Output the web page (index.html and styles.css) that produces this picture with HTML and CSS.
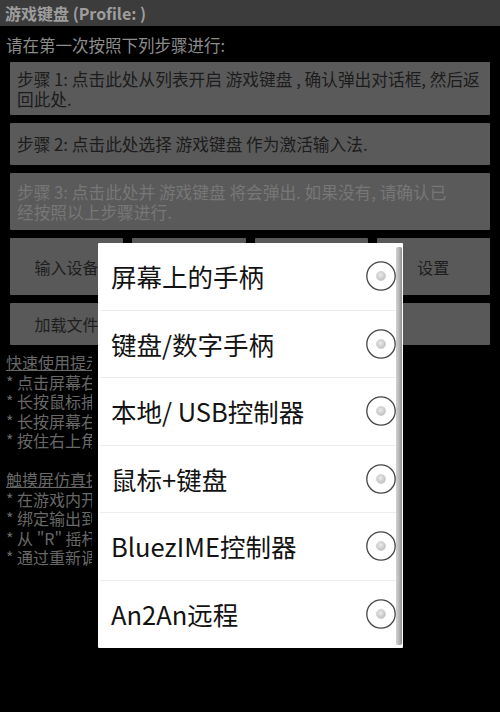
FILE: index.html
```html
<!DOCTYPE html>
<html lang="zh">
<head>
<meta charset="utf-8">
<title>游戏键盘</title>
<link rel="stylesheet" href="styles.css">
</head>
<body>
<div class="screen">
  <div class="titlebar">游戏键盘 (Profile: )</div>
  <div class="intro">请在第一次按照下列步骤进行:</div>
  <div class="steps">
    <div class="step step1">步骤 1: 点击此处从列表开启 游戏键盘 , 确认弹出对话框, 然后返<br>回此处.</div>
    <div class="step step2">步骤 2: 点击此处选择 游戏键盘 作为激活输入法.</div>
    <div class="step step3 disabled">步骤 3: 点击此处并 游戏键盘 将会弹出. 如果没有, 请确认已<br>经按照以上步骤进行.</div>
    <div class="btnrow tall">
      <div class="btn">输入设备</div>
      <div class="btn"></div>
      <div class="btn"></div>
      <div class="btn">设置</div>
    </div>
    <div class="btnrow short">
      <div class="btn">加载文件</div>
      <div class="btn"></div>
      <div class="btn wide"></div>
    </div>
  </div>
  <div class="hints">
    <div class="hhead">快速使用提示</div>
    <div class="hline">* 点击屏幕右</div>
    <div class="hline">* 长按鼠标捕</div>
    <div class="hline">* 长按屏幕右</div>
    <div class="hline">* 按住右上角</div>
    <div class="hline blank">&nbsp;</div>
    <div class="hhead">触摸屏仿真提</div>
    <div class="hline">* 在游戏内开</div>
    <div class="hline">* 绑定输出到</div>
    <div class="hline">* 从 "R" 摇杆</div>
    <div class="hline">* 通过重新调</div>
  </div>

  <div class="dialog">
    <div class="item"><span class="label">屏幕上的手柄</span><svg class="radio" viewBox="0 0 30 30"><defs><radialGradient id="g" cx="45%" cy="40%" r="60%"><stop offset="0" stop-color="#ececec"/><stop offset="1" stop-color="#bdbdbd"/></radialGradient></defs><circle cx="15" cy="15" r="14.2" fill="#fff" stroke="#454545" stroke-width="1.3"/><circle cx="15" cy="15" r="4.6" fill="url(#g)" stroke="#d4d4d4" stroke-width="0.8"/></svg></div>
    <div class="item"><span class="label">键盘/数字手柄</span><svg class="radio" viewBox="0 0 30 30"><circle cx="15" cy="15" r="14.2" fill="#fff" stroke="#454545" stroke-width="1.3"/><circle cx="15" cy="15" r="4.6" fill="url(#g)" stroke="#d4d4d4" stroke-width="0.8"/></svg></div>
    <div class="item"><span class="label">本地/ USB控制器</span><svg class="radio" viewBox="0 0 30 30"><circle cx="15" cy="15" r="14.2" fill="#fff" stroke="#454545" stroke-width="1.3"/><circle cx="15" cy="15" r="4.6" fill="url(#g)" stroke="#d4d4d4" stroke-width="0.8"/></svg></div>
    <div class="item"><span class="label">鼠标+键盘</span><svg class="radio" viewBox="0 0 30 30"><circle cx="15" cy="15" r="14.2" fill="#fff" stroke="#454545" stroke-width="1.3"/><circle cx="15" cy="15" r="4.6" fill="url(#g)" stroke="#d4d4d4" stroke-width="0.8"/></svg></div>
    <div class="item"><span class="label">BluezIME控制器</span><svg class="radio" viewBox="0 0 30 30"><circle cx="15" cy="15" r="14.2" fill="#fff" stroke="#454545" stroke-width="1.3"/><circle cx="15" cy="15" r="4.6" fill="url(#g)" stroke="#d4d4d4" stroke-width="0.8"/></svg></div>
    <div class="item last"><span class="label">An2An远程</span><svg class="radio" viewBox="0 0 30 30"><circle cx="15" cy="15" r="14.2" fill="#fff" stroke="#454545" stroke-width="1.3"/><circle cx="15" cy="15" r="4.6" fill="url(#g)" stroke="#d4d4d4" stroke-width="0.8"/></svg></div>
    <div class="scrollbar"></div>
  </div>
</div>
</body>
</html>
```

FILE: styles.css
```css
* { box-sizing: border-box; }
html, body {
  margin: 0;
  padding: 0;
  background: #000;
}
body {
  width: 500px;
  height: 712px;
  overflow: hidden;
  font-family: "Noto Sans CJK SC", "Noto Sans", sans-serif;
}
.screen {
  position: relative;
  width: 500px;
  height: 712px;
  background: #000;
}
.titlebar {
  height: 26px;
  line-height: 26px;
  background: #3c3c3c;
  color: #9e9e9e;
  font-size: 16px;
  font-weight: bold;
  padding-left: 5px;
  white-space: nowrap;
}
.intro {
  padding: 9px 0 0 6px;
  height: 36px;
  line-height: 20px;
  font-size: 16.5px;
  color: #8c8c8c;
}
.steps {
  padding: 0 10px;
  display: flex;
  flex-direction: column;
  gap: 8px;
}
.step {
  background: #5a5a5a;
  color: #1c1c1c;
  font-size: 16.7px;
  line-height: 20px;
  padding: 0 7px;
  border-radius: 1px;
  white-space: nowrap;
}
.step1 { height: 53px; padding-top: 7px; }
.step2 { height: 42px; padding-top: 11px; }
.step3 { height: 57px; padding-top: 9px; }
.step.disabled { color: #777; }
.btnrow {
  display: grid;
  grid-template-columns: repeat(4, 1fr);
  gap: 9px;
}
.btn {
  background: #595959;
  color: #1e1e1e;
  font-size: 16px;
  display: flex;
  align-items: center;
  justify-content: center;
  border-radius: 1px;
}
.btnrow.tall .btn { height: 57px; }
.btnrow.short .btn { height: 42px; }
.btn.wide { grid-column: span 2; }
.hints {
  width: 92px;
  overflow: hidden;
  padding: 0 0 0 6px;
  margin-top: 8px;
  font-size: 16px;
  line-height: 19.5px;
  color: #686868;
  white-space: nowrap;
}
.hhead { text-decoration: underline; }
.dialog {
  position: absolute;
  left: 98px;
  top: 243px;
  width: 305px;
  height: 405px;
  background: #fff;
  border-radius: 1px;
  display: flex;
  flex-direction: column;
}
.item {
  height: 67.5px;
  margin: 0 7px 0 2px;
  padding-left: 11px;
  display: flex;
  align-items: center;
  justify-content: space-between;
  border-bottom: 1px solid #ececec;
}
.item.last { border-bottom: none; }
.label {
  font-size: 25.5px;
  color: #131313;
  line-height: 30px;
  white-space: nowrap;
}
.radio {
  width: 30px;
  height: 30px;
  flex: none;
  margin-right: 0;
}
.scrollbar {
  position: absolute;
  right: 1px;
  top: 4px;
  bottom: 3px;
  width: 6px;
  background: linear-gradient(to right, #d2d2d2, #b8b8b8 50%, #8e8e8e);
  border-radius: 2px;
}
```
